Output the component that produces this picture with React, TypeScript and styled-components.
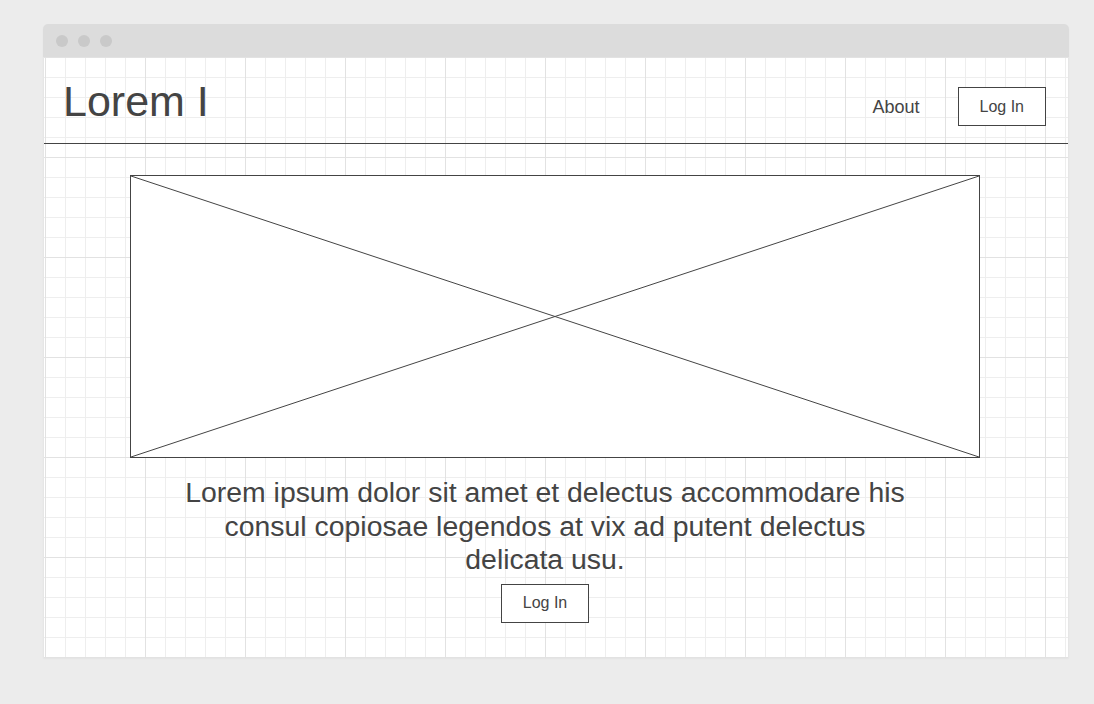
import React from "react";
import styled, { createGlobalStyle } from "styled-components";

const Global = createGlobalStyle`
  html, body {
    margin: 0;
    padding: 0;
    background: #ececec;
  }
  body {
    font-family: "Liberation Sans", Arial, sans-serif;
    color: #444;
  }
`;

const Page = styled.div`
  padding: 24px 25px 46px 43px;
`;

const Window = styled.div`
  width: 1026px;
  display: flex;
  flex-direction: column;
  box-shadow: 0 1px 2px rgba(0, 0, 0, 0.04);
  border-radius: 5px 5px 0 0;
`;

const TitleBar = styled.div`
  height: 33px;
  background: #dcdcdc;
  border-radius: 5px 5px 0 0;
  display: flex;
  align-items: center;
  gap: 10px;
  padding-left: 13px;
`;

const Dot = styled.span`
  width: 12px;
  height: 12px;
  border-radius: 50%;
  background: #c9c9c9;
`;

const Canvas = styled.div`
  height: 601px;
  display: flex;
  flex-direction: column;
  background-color: #fff;
  background-image:
    linear-gradient(to right, #e2e2e2 1px, transparent 1px),
    linear-gradient(to bottom, #e2e2e2 1px, transparent 1px),
    linear-gradient(to right, #eeeeee 1px, transparent 1px),
    linear-gradient(to bottom, #eeeeee 1px, transparent 1px);
  background-size: 100px 100px, 100px 100px, 20px 20px, 20px 20px;
  background-position: 1px 0, 1px 0, 1px 0, 1px 0;
  border-left: 1px solid #e6e6e6;
  border-right: 1px solid #e6e6e6;
`;

const Header = styled.header`
  box-sizing: border-box;
  height: 87px;
  border-bottom: 1px solid #444;
  display: flex;
  align-items: flex-start;
  justify-content: space-between;
  padding: 0 22px 0 19px;
`;

const Brand = styled.h1`
  margin: 20px 0 0;
  font-size: 43px;
  font-weight: 400;
  line-height: 48px;
  color: #444;
`;

const Nav = styled.nav`
  display: flex;
  align-items: center;
  gap: 38px;
  margin-top: 30px;
`;

const NavLink = styled.a`
  font-size: 18px;
  color: #444;
  text-decoration: none;
  padding-top: 1px;
`;

const Button = styled.button`
  box-sizing: border-box;
  height: 39px;
  padding: 0 21px;
  border: 1px solid #444;
  background: #fff;
  font-family: "Liberation Sans", Arial, sans-serif;
  font-size: 16px;
  color: #444;
  cursor: pointer;
`;

const Main = styled.main`
  display: flex;
  flex-direction: column;
  padding-top: 31px;
`;

const Placeholder = styled.div`
  box-sizing: border-box;
  width: 850px;
  height: 283px;
  margin-left: 86px;
  border: 1px solid #444;
  background: #fff;
  display: flex;
`;

const Copy = styled.section`
  display: flex;
  flex-direction: column;
  align-items: center;
  padding-right: 22px;
`;

const Lead = styled.p`
  margin: 18px 0 7px;
  max-width: 728px;
  text-align: center;
  font-size: 28.4px;
  line-height: 33.6px;
  color: #444;
`;

export default function App() {
  return (
    <>
      <Global />
      <Page>
        <Window>
          <TitleBar>
            <Dot />
            <Dot />
            <Dot />
          </TitleBar>
          <Canvas>
            <Header>
              <Brand>Lorem I</Brand>
              <Nav>
                <NavLink href="#">About</NavLink>
                <Button>Log In</Button>
              </Nav>
            </Header>
            <Main>
              <Placeholder>
                <svg width="100%" height="100%" viewBox="0 0 848 281" preserveAspectRatio="none">
                  <line x1="0" y1="0" x2="848" y2="281" stroke="#444" strokeWidth="1" />
                  <line x1="848" y1="0" x2="0" y2="281" stroke="#444" strokeWidth="1" />
                </svg>
              </Placeholder>
              <Copy>
                <Lead>
                  Lorem ipsum dolor sit amet et delectus accommodare his consul copiosae legendos at vix ad putent delectus delicata usu.
                </Lead>
                <Button>Log In</Button>
              </Copy>
            </Main>
          </Canvas>
        </Window>
      </Page>
    </>
  );
}
